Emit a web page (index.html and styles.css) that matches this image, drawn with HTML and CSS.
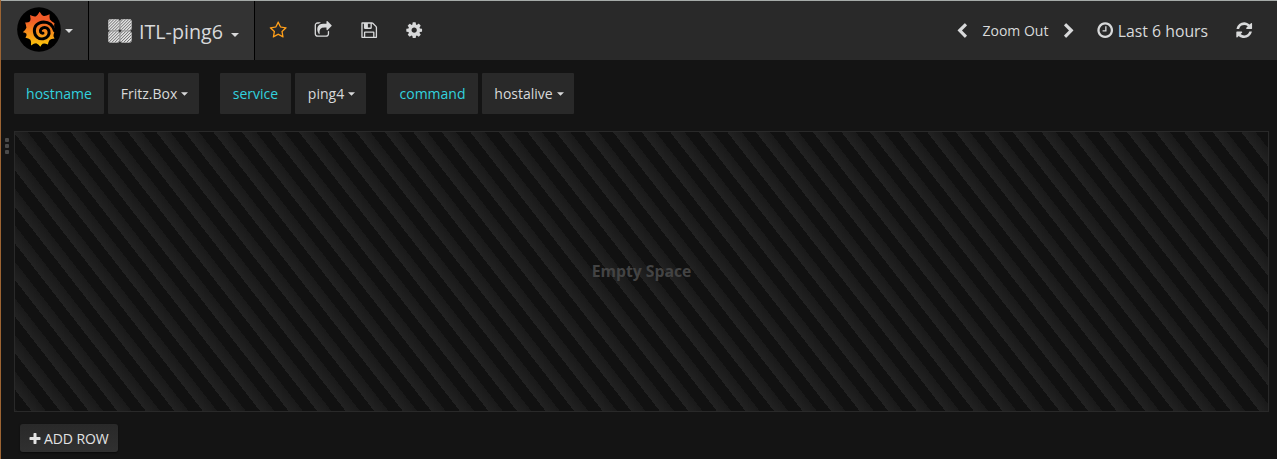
FILE: index.html
```html
<!DOCTYPE html>
<html lang="en">
<head>
<meta charset="utf-8">
<title>ITL-ping6</title>
<link rel="stylesheet" href="styles.css">
</head>
<body>
<header class="navbar">
  <div class="brand">
    <svg class="logo" viewBox="0 0 132 136">
      <defs><linearGradient id="flame" x1="0" y1="0" x2="0" y2="1"><stop offset="0.25" stop-color="#f05a28"/><stop offset="1" stop-color="#fbca0a"/></linearGradient></defs>
      <ellipse cx="66" cy="68" rx="66" ry="67" fill="#000"/>
      <path fill="url(#flame)" d="M39 24Q50 30 57 28Q62 24 68 14Q74 25 80 27Q87 28 98 22Q97 32 99 38Q104 44 113 49Q111 53 112 59L114 70L110 84Q108 88 113 95Q102 96 98 100Q94 105 93 113Q83 109 77 111Q73 114 70 120Q65 112 59 110Q52 109 42 116Q43 104 40 99Q35 95 25 93Q30 86 28 81Q25 77 17 76Q26 69 28 63Q28 57 24 47Q34 48 39 43Q42 37 39 24Z"/>
      <path class="swirl" d="M113 72C108 55 95 45 80 45C62 46 51 58 52 73C53 90 66 98 79 96C92 94 99 83 96 72C93 61 80 59 73 66C67 73 71 80 78 79"/>
    </svg>
    <svg class="caret brand-caret" viewBox="0 0 8 4"><path d="M0 0h8L4 4z"/></svg>
  </div>
  <div class="dashboard-title">
    <svg class="grid-icon" viewBox="0 0 24 24">
      <defs><pattern id="hatch" width="2.1" height="2.1" patternUnits="userSpaceOnUse" patternTransform="rotate(45)"><rect width="2.1" height="2.1" fill="#e2e2e2"/><rect width=".7" height="2.1" fill="#686868"/></pattern></defs>
      <g fill="url(#hatch)" stroke="#c9c9c9" stroke-width=".5"><rect x=".3" y=".3" width="11.200" height="11.200" rx="2"/><rect x="12.300" y=".3" width="11.200" height="11.200" rx="2"/><rect x=".3" y="12.300" width="11.200" height="11.200" rx="2"/><rect x="12.300" y="12.300" width="11.200" height="11.200" rx="2"/></g>
    </svg>
    <span class="title-text">ITL-ping6</span>
    <svg class="caret title-caret" viewBox="0 0 8 4"><path d="M0 0h8L4 4z"/></svg>
  </div>
  <nav class="actions">
    <svg class="icon star" viewBox="0 0 1792 1792"><path d="M1201 1004l306-297-422-62-189-382-189 382-422 62 306 297-73 421 378-199 377 199zm527-357q0 22-26 48l-363 354 86 500q1 7 1 20 0 50-41 50-19 0-40-12l-449-236-449 236q-22 12-40 12-21 0-31.500-14.500t-10.500-35.500q0-6 2-20l86-500-364-354q-25-27-25-48 0-37 56-46l502-73 225-455q19-41 49-41t49 41l225 455 502 73q56 9 56 46z"/></svg>
    <svg class="icon" viewBox="0 0 1792 1792"><path d="M1472 989v259q0 119-84.500 203.500t-203.500 84.500h-832q-119 0-203.500-84.500t-84.500-203.500v-832q0-119 84.500-203.500t203.500-84.500h255q13 0 22.500 9.500t9.500 22.500q0 27-26 32-77 26-133 60-10 4-16 4h-112q-66 0-113 47t-47 113v832q0 66 47 113t113 47h832q66 0 113-47t47-113v-214q0-19 18-29 28-13 54-37 16-16 35-8 21 9 21 29zm237-496l-384 384q-18 19-45 19-12 0-25-5-39-17-39-59v-192h-160q-323 0-438 131-119 137-74 473 3 23-20 34-8 2-12 2-16 0-26-13-10-14-21-31t-39.500-68.500-49.500-99.500-38.500-114-17.500-122q0-49 3.500-91t14-90 28-88 47-81.500 68.500-74 94.500-61.500 124.500-48.500 159.500-30.500 196.500-11h160v-192q0-42 39-59 13-5 25-5 26 0 45 19l384 384q19 19 19 45t-19 45z"/></svg>
    <svg class="icon" viewBox="0 0 1792 1792"><path d="M512 1536h768v-384h-768v384zm896 0h128v-896q0-14-10-38.500t-20-34.500l-281-281q-10-10-34-20t-39-10v416q0 40-28 68t-68 28h-576q-40 0-68-28t-28-68v-416h-128v1280h128v-416q0-40 28-68t68-28h832q40 0 68 28t28 68v416zm-384-928v-320q0-13-9.500-22.500t-22.500-9.500h-192q-13 0-22.500 9.500t-9.500 22.500v320q0 13 9.500 22.500t22.500 9.500h192q13 0 22.500-9.500t9.500-22.500zm640 32v928q0 40-28 68t-68 28h-1344q-40 0-68-28t-28-68v-1344q0-40 28-68t68-28h928q40 0 88 20t76 48l280 280q28 28 48 76t20 88z"/></svg>
    <svg class="icon" viewBox="0 0 1792 1792"><path d="M1152 896q0-106-75-181t-181-75-181 75-75 181 75 181 181 75 181-75 75-181zm512-109v222q0 12-8 23t-20 13l-185 28q-19 54-39 91 35 50 107 138 10 12 10 25t-9 23q-27 37-99 108t-94 71q-12 0-26-9l-138-108q-44 23-91 38-16 136-29 186-7 28-36 28h-222q-14 0-24.500-8.500t-11.500-21.500l-28-184q-49-16-90-37l-141 107q-10 9-25 9-14 0-25-11-126-114-165-168-7-10-7-23 0-12 8-23 15-21 51-66.500t54-70.500q-27-50-41-99l-183-27q-13-2-21-12.500t-8-23.500v-222q0-12 8-23t19-13l186-28q14-46 39-92-40-57-107-138-10-12-10-24 0-10 9-23 26-36 98.500-107.500t94.500-71.500q13 0 26 10l138 107q44-23 91-38 16-136 29-186 7-28 36-28h222q14 0 24.500 8.500t11.500 21.500l28 184q49 16 90 37l142-107q9-9 24-9 13 0 25 10 129 119 165 170 7 8 7 22 0 12-8 23-15 21-51 66.500t-54 70.500q26 50 41 98l183 28q13 2 21 12.500t8 23.500z"/></svg>
  </nav>
  <div class="time-controls">
    <svg class="chevron" viewBox="0 0 1792 1792"><path d="M1427 301l-531 531 531 531q19 19 19 45t-19 45l-166 166q-19 19-45 19t-45-19l-742-742q-19-19-19-45t19-45l742-742q19-19 45-19t45 19l166 166q19 19 19 45t-19 45z"/></svg>
    <span class="zoom-out">Zoom Out</span>
    <svg class="chevron" viewBox="0 0 1792 1792"><path d="M1363 877l-742 742q-19 19-45 19t-45-19l-166-166q-19-19-19-45t19-45l531-531-531-531q-19-19-19-45t19-45l166-166q19-19 45-19t45 19l742 742q19 19 19 45t-19 45z"/></svg>
    <svg class="icon clock" viewBox="0 0 1792 1792"><path d="M1024 544v448q0 14-9 23t-23 9h-320q-14 0-23-9t-9-23v-64q0-14 9-23t23-9h224v-352q0-14 9-23t23-9h64q14 0 23 9t9 23zm416 352q0-148-73-273t-198-198-273-73-273 73-198 198-73 273 73 273 198 198 273 73 273-73 198-198 73-273zm224 0q0 209-103 385.500t-279.500 279.500-385.500 103-385.500-103-279.500-279.500-103-385.500 103-385.500 279.500-279.500 385.500-103 385.500 103 279.500 279.500 103 385.500z"/></svg>
    <span class="range">Last 6 hours</span>
    <svg class="icon refresh" viewBox="0 0 1792 1792"><path d="M1639 1056q0 5-1 7-64 268-268 434.500t-478 166.500q-146 0-282.500-55t-243.500-157l-129 129q-19 19-45 19t-45-19-19-45v-448q0-26 19-45t45-19h448q26 0 45 19t19 45-19 45l-137 137q71 66 161 102t187 36q134 0 250-65t186-179q11-17 53-117 8-23 30-23h192q13 0 22.500 9.500t9.500 22.500zm25-800v448q0 26-19 45t-45 19h-448q-26 0-45-19t-19-45 19-45l138-138q-148-137-349-137-134 0-250 65t-186 179q-11 17-53 117-8 23-30 23h-199q-13 0-22.500-9.500t-9.500-22.500v-7q65-268 270-434.500t480-166.500q146 0 284 55.500t245 156.500l130-129q19-19 45-19t45 19 19 45z"/></svg>
  </div>
</header>
<main class="dashboard">
  <div class="variables">
    <div class="variable"><span class="label w-90">hostname</span><span class="value w-91">Fritz.Box<svg class="caret" viewBox="0 0 8 4"><path d="M0 0h8L4 4z"/></svg></span></div>
    <div class="variable"><span class="label w-71">service</span><span class="value w-71">ping4<svg class="caret" viewBox="0 0 8 4"><path d="M0 0h8L4 4z"/></svg></span></div>
    <div class="variable"><span class="label w-91">command</span><span class="value w-92">hostalive<svg class="caret" viewBox="0 0 8 4"><path d="M0 0h8L4 4z"/></svg></span></div>
  </div>
  <section class="row">
    <div class="row-handle"><i></i><i></i><i></i></div>
    <div class="empty-panel">Empty Space</div>
  </section>
  <button class="add-row" type="button"><svg class="plus" viewBox="0 0 1792 1792"><path d="M1600 736v192q0 40-28 68t-68 28h-416v416q0 40-28 68t-68 28h-192q-40 0-68-28t-28-68v-416h-416q-40 0-68-28t-28-68v-192q0-40 28-68t68-28h416v-416q0-40 28-68t68-28h192q40 0 68 28t28 68v416h416q40 0 68 28t28 68z"/></svg>ADD ROW</button>
</main>
</body>
</html>
```
FILE: styles.css
```css
* { box-sizing: border-box; }
body {
  margin: 0;
  height: 459px;
  overflow: hidden;
  border-left: 1px solid #9c6433;
  background: #141414;
  color: #d8d9da;
  font: 14px/20px "Open Sans", sans-serif;
}
svg { display: block; flex: none; fill: currentColor; }
.navbar {
  display: flex;
  height: 60px;
  border-top: 1px solid #a5aaa8;
  background: #292929;
}
.brand {
  display: flex;
  align-items: center;
  width: 88px;
  border-right: 1px solid #000;
  background: #333;
  padding: 0 0 2px 16px;
}
.logo { width: 44px; height: 45px; }
.swirl { fill: none; stroke: #000; stroke-width: 9; stroke-linecap: round; }
.caret { width: 7px; height: 4px; margin-left: 4px; }
.brand-caret { margin: 3px 0 0 4px; width: 8px; }
.dashboard-title {
  display: flex;
  align-items: center;
  width: 166px;
  padding-left: 19px;
  border-right: 1px solid #000;
  background: #333;
}
.grid-icon { width: 24px; height: 24px; margin-top: 1px; }
.title-text { margin: 2px 0 0 7px; font-size: 19.7px; line-height: 28px; }
.title-caret { width: 8px; margin: 8px 0 0 8px; }
.actions { display: flex; align-items: center; gap: 27px; padding: 0 0 0 14px; }
.icon { width: 18.4px; height: 18.4px; }
.star { color: #ff9f1a; }
.time-controls { display: flex; align-items: center; margin-left: auto; padding-right: 23.500px; }
.chevron { width: 16px; height: 16px; }
.zoom-out { margin: 0 13px; }
.clock { margin-left: 19px; }
.range { margin-left: 3px; font-size: 15.8px; }
.refresh { margin-left: 27px; }
.dashboard { padding: 13px 8px 0 13px; }
.variables { display: flex; gap: 21px; }
.variable { display: flex; gap: 4px; }
.label, .value {
  display: flex;
  align-items: center;
  justify-content: center;
  height: 41px;
  border-radius: 1px;
  background: #292929;
}
.label { color: #32d1df; }
.value { padding-left: 2px; }
.w-71 { width: 71px; }
.w-90 { width: 90px; }
.w-91 { width: 91px; }
.w-92 { width: 92px; }
.row { display: flex; margin: 17px 0 0 -10px; }
.row-handle { display: grid; align-content: start; gap: 2px; width: 10px; padding: 7px 0 0 1px; }
.row-handle i { width: 4px; height: 4px; border-radius: 1px; background: #4a4a4a; }
.empty-panel {
  display: flex;
  flex: 1;
  align-items: center;
  justify-content: center;
  height: 281px;
  padding-bottom: 2px;
  border: 1px solid #292929;
  background: repeating-linear-gradient(-128deg, #111, #111 11.25px, #191919 11.25px, #222 22.5px) border-box;
  color: #434343;
  font-size: 15.75px;
  font-weight: 700;
}
.add-row {
  display: flex;
  align-items: center;
  width: 98px;
  height: 28px;
  margin: 12px 0 0 6px;
  padding: 2px 0 0 8px;
  border: 0;
  border-radius: 3px;
  background: linear-gradient(#292929, #303030);
  box-shadow: 0 1px 2px #0008;
  color: #e3e3e3;
  font: 14px/20px "Open Sans", sans-serif;
  letter-spacing: -.1px;
}
.plus { width: 14px; height: 14px; margin-right: 2px; }
```
